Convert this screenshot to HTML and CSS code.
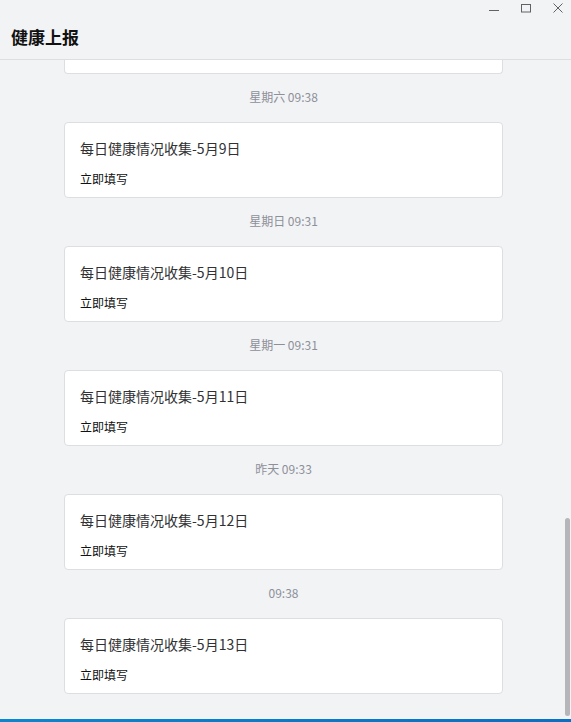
FILE: index.html
```html
<!DOCTYPE html>
<html lang="zh-CN">
<head>
    <meta charset="UTF-8">
    <meta name="viewport" content="width=device-width, initial-scale=1.0">
    <title>健康上报</title>
    <link rel="stylesheet" href="styles.css">
</head>
<body>
    <div class="window">
        <div class="titlebar">
            <div class="win-controls">
                <svg class="win-btn" width="10" height="10" viewBox="0 0 10 10"><path d="M0 7.5h10" stroke="#5f6368" stroke-width="1"/></svg>
                <svg class="win-btn" width="10" height="10" viewBox="0 0 10 10"><rect x="0.5" y="1.5" width="9" height="7.5" fill="none" stroke="#5f6368" stroke-width="1"/></svg>
                <svg class="win-btn" width="10" height="10" viewBox="0 0 10 10"><path d="M0.5 0.5l9 9M9.5 0.5l-9 9" stroke="#5f6368" stroke-width="1"/></svg>
            </div>
            <h1 class="page-title">健康上报</h1>
        </div>

        <div class="message-area">
            <div class="message-list">
                <!-- previous card, scrolled mostly out of view -->
                <div class="card card-cut"></div>

                <div class="time-label">星期六 09:38</div>
                <div class="card">
                    <div class="card-title">每日健康情况收集-5月9日</div>
                    <div class="card-action">立即填写</div>
                </div>

                <div class="time-label">星期日 09:31</div>
                <div class="card">
                    <div class="card-title">每日健康情况收集-5月10日</div>
                    <div class="card-action">立即填写</div>
                </div>

                <div class="time-label">星期一 09:31</div>
                <div class="card">
                    <div class="card-title">每日健康情况收集-5月11日</div>
                    <div class="card-action">立即填写</div>
                </div>

                <div class="time-label">昨天 09:33</div>
                <div class="card">
                    <div class="card-title">每日健康情况收集-5月12日</div>
                    <div class="card-action">立即填写</div>
                </div>

                <div class="time-label">09:38</div>
                <div class="card">
                    <div class="card-title">每日健康情况收集-5月13日</div>
                    <div class="card-action">立即填写</div>
                </div>
            </div>
            <div class="scroll-thumb"></div>
        </div>

        <div class="bottom-bar"></div>
    </div>
</body>
</html>
```

FILE: styles.css
```css
html, body {
    margin: 0;
    padding: 0;
    height: 100%;
}

body {
    font-family: "Noto Sans CJK SC", "Noto Sans", sans-serif;
    background: #f2f3f5;
    color: #303133;
    overflow: hidden;
}

.window {
    display: flex;
    flex-direction: column;
    height: 722px;
}

.titlebar {
    position: relative;
    height: 59px;
    border-bottom: 1px solid #dcdee2;
    flex-shrink: 0;
}

.win-controls {
    position: absolute;
    top: 3px;
    right: 8px;
    display: flex;
    gap: 22px;
}

.win-btn {
    display: block;
}

.page-title {
    margin: 0;
    padding: 26px 0 0 11px;
    font-size: 17px;
    line-height: 22px;
    font-weight: bold;
    color: #111;
}

.message-area {
    position: relative;
    flex: 1;
    overflow: hidden;
}

.message-list {
    width: 439px;
    margin-left: 64px;
}

.card {
    background: #fff;
    border: 1px solid #dcdee2;
    border-radius: 4px;
    padding: 15px 15px 9px;
}

.card-cut {
    height: 13px;
    padding: 0;
    border-top: none;
    border-radius: 0 0 4px 4px;
}

.card-title {
    font-size: 14px;
    line-height: 20px;
    color: #303133;
}

.card-action {
    margin-top: 12px;
    font-size: 12px;
    line-height: 18px;
    color: #111;
}

.time-label {
    padding: 14px 0 16px;
    font-size: 12px;
    line-height: 18px;
    text-align: center;
    color: #8d9099;
}

.scroll-thumb {
    position: absolute;
    right: 1px;
    top: 458px;
    width: 5px;
    height: 198px;
    border-radius: 3px;
    background: #b4b6ba;
}

.bottom-bar {
    height: 3px;
    flex-shrink: 0;
    background: linear-gradient(90deg, #0a86cf, #0a6fc2);
}
```
